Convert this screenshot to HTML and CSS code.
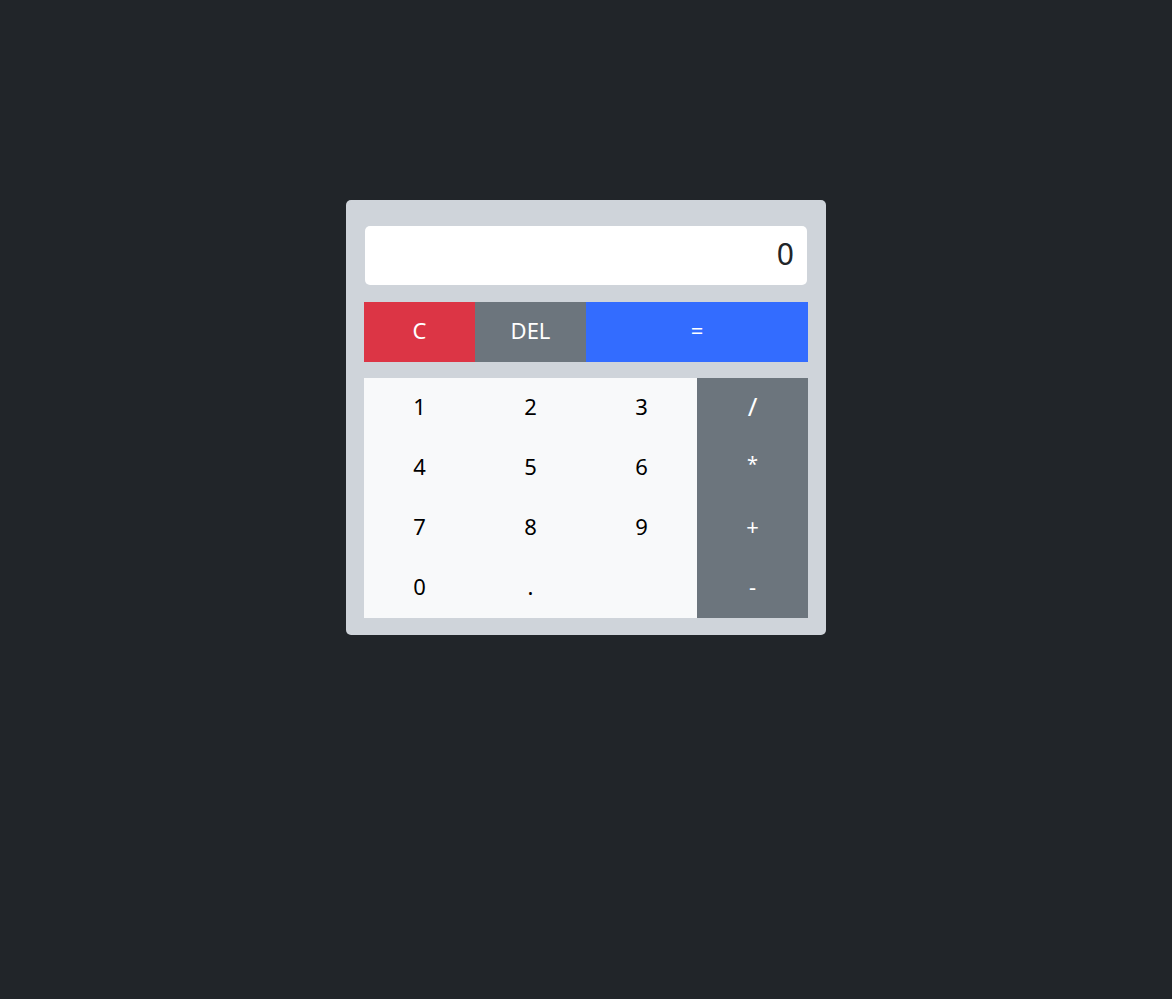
FILE: index.html
```html
<!DOCTYPE html>
<html lang="en">
<head>
<meta charset="utf-8">
<title>Calculator</title>
<link rel="stylesheet" href="styles.css">
</head>
<body>
<main class="page">
  <div class="calc">
    <div class="display">0</div>
    <div class="top-row">
      <button class="btn btn-red">C</button>
      <button class="btn btn-gray">DEL</button>
      <button class="btn btn-blue btn-wide">=</button>
    </div>
    <div class="pad">
      <button class="btn btn-light">1</button>
      <button class="btn btn-light">2</button>
      <button class="btn btn-light">3</button>
      <button class="btn btn-gray op op-slash">/</button>
      <button class="btn btn-light">4</button>
      <button class="btn btn-light">5</button>
      <button class="btn btn-light">6</button>
      <button class="btn btn-gray op op-star">*</button>
      <button class="btn btn-light">7</button>
      <button class="btn btn-light">8</button>
      <button class="btn btn-light">9</button>
      <button class="btn btn-gray op">+</button>
      <button class="btn btn-light">0</button>
      <button class="btn btn-light">.</button>
      <button class="btn btn-light"></button>
      <button class="btn btn-gray op">-</button>
    </div>
  </div>
</main>
</body>
</html>
```
FILE: styles.css
```css
html, body {
  margin: 0;
  padding: 0;
  background: #212529;
  font-family: "Noto Sans", "Open Sans", "DejaVu Sans", sans-serif;
}
.page {
  display: flex;
  justify-content: center;
  align-items: flex-start;
  padding-top: 200px;
}
.calc {
  width: 480px;
  box-sizing: border-box;
  background: #cfd4da;
  border-radius: 5px;
  padding: 26px 18px 17px 18px;
  display: flex;
  flex-direction: column;
}
.display {
  height: 59px;
  margin: 0 1px;
  background: #ffffff;
  border-radius: 5px;
  box-sizing: border-box;
  padding: 0 13px 4px 13px;
  display: flex;
  align-items: center;
  justify-content: flex-end;
  font-size: 30px;
  color: #212529;
}
.top-row {
  margin-top: 17px;
  display: grid;
  grid-template-columns: 111px 111px 222px;
  height: 60px;
}
.pad {
  margin-top: 16px;
  display: grid;
  grid-template-columns: repeat(4, 111px);
  grid-auto-rows: 60px;
}
.btn {
  border: 0;
  margin: 0;
  padding: 0 0 4px 0;
  font-family: inherit;
  font-size: 22px;
  display: flex;
  align-items: center;
  justify-content: center;
  cursor: pointer;
}
.btn-red { background: #dc3545; color: #fff; }
.btn-gray { background: #6c757d; color: #fff; }
.btn-blue { background: #336cff; color: #fff; }
.btn-light { background: #f8f9fa; color: #000; }
.op-slash { font-size: 26px; }
.op-star { font-size: 20px; padding-bottom: 9px; }
```
